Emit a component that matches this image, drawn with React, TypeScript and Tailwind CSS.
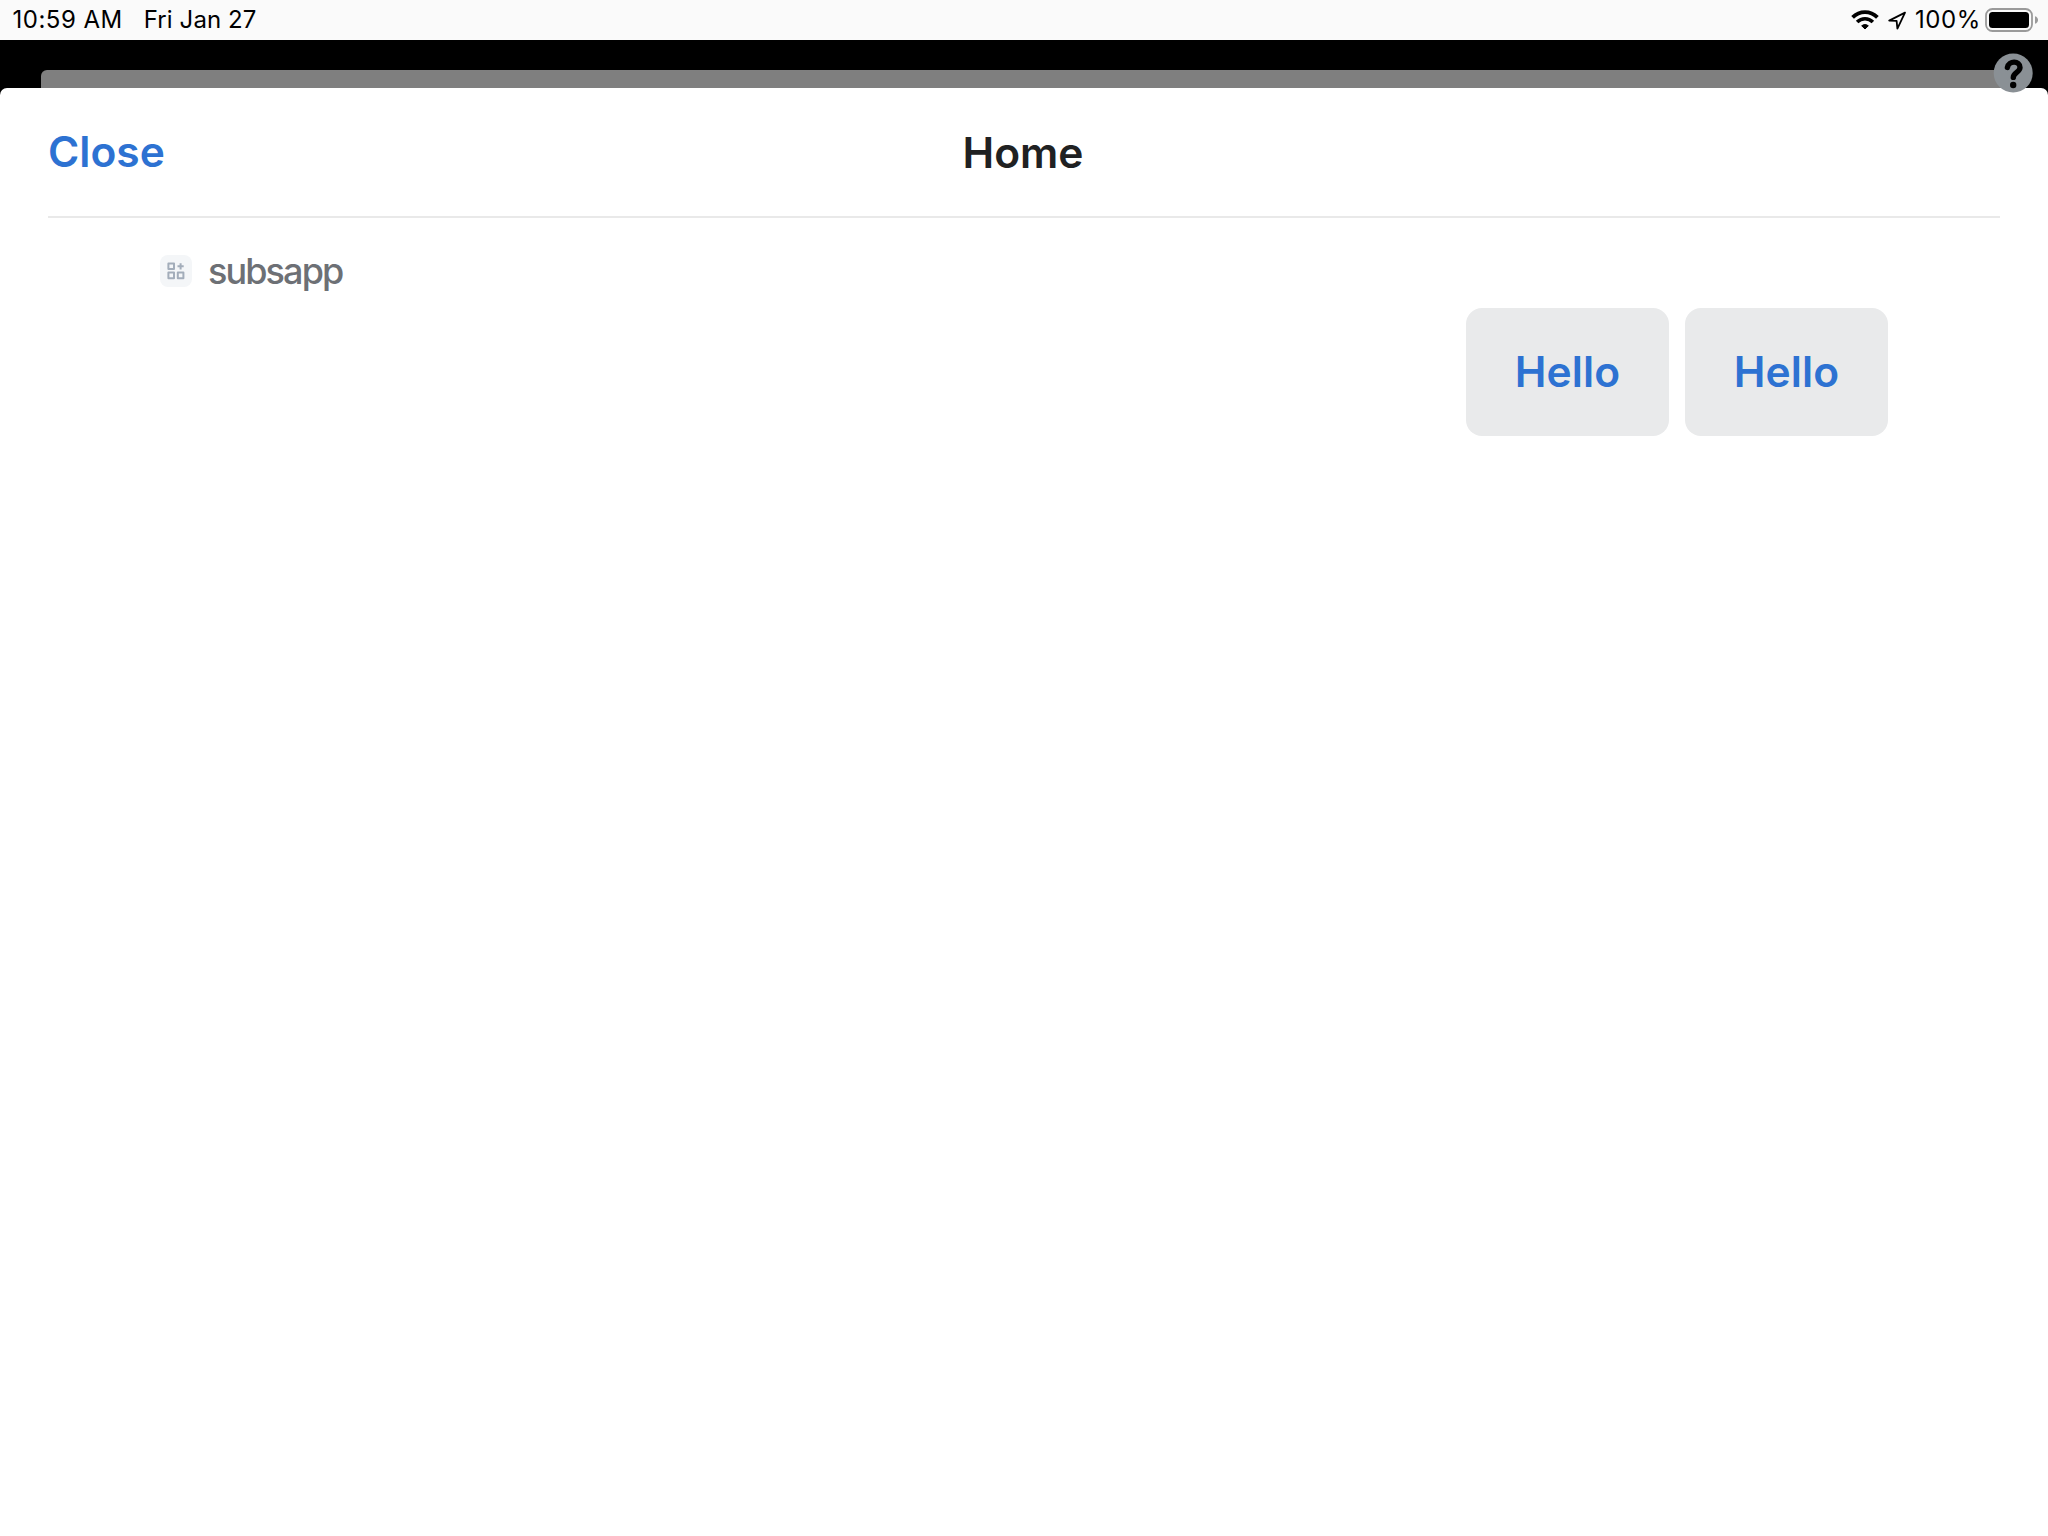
function WifiIcon() {
  return (
    <svg className="h-[20px] w-[28px]" viewBox="0 0 28 20" fill="none" stroke="#000">
      <path d="M1.6 7.4C8.6 .4 19.4 .4 26.4 7.4" strokeWidth="3.8" />
      <path d="M6.1 12C10.6 7.6 17.4 7.6 21.9 12" strokeWidth="3.6" />
      <path d="M14 19L10.7 15.8C12.6 14.2 15.4 14.2 17.3 15.8Z" fill="#000" strokeWidth="1" strokeLinejoin="round" />
    </svg>
  );
}

function LocationIcon() {
  return (
    <svg className="h-[20px] w-[20px]" viewBox="0 0 20 20" fill="none" stroke="#000" strokeWidth="1.8" strokeLinejoin="round">
      <path d="M18 2.6L2.2 10.6L9.6 10.9L10.4 18.6Z" />
    </svg>
  );
}

function BatteryIcon() {
  return (
    <svg className="h-[24px] w-[54px]" viewBox="0 0 54 24">
      <rect x="1" y="1" width="46" height="22" rx="6.5" fill="none" stroke="#9a9a9a" strokeWidth="1.8" />
      <rect x="4" y="4" width="40" height="16" rx="3.5" fill="#000" />
      <path d="M50 8.2C52 8.8 53 10.2 53 12S52 15.2 50 15.8Z" fill="#9a9a9a" />
    </svg>
  );
}

function HelpIcon() {
  return (
    <svg className="h-[40px] w-[40px]" viewBox="0 0 40 40" fill="none">
      <circle cx="20.2" cy="20" r="19.5" fill="#8a9095" />
      <path
        d="M14.4 14.4C15.8 7.2 27 7.6 27 14.4C27 19.2 20.3 19.4 20.3 24.4"
        stroke="#000"
        strokeWidth="5.4"
        strokeLinecap="round"
      />
      <circle cx="20.2" cy="32" r="3.2" fill="#000" />
    </svg>
  );
}

function AppIcon() {
  return (
    <div className="flex size-8 items-center justify-center rounded-lg bg-[#f4f6f8]">
      <svg className="size-[18px]" viewBox="0 0 18 18" fill="none" stroke="#a3adba" strokeWidth="2" strokeLinejoin="round">
        <rect x="1.4" y="1.4" width="5.6" height="5.6" />
        <rect x="1.4" y="10.6" width="5.6" height="5.6" />
        <rect x="10.8" y="10.6" width="5.6" height="5.6" />
        <path d="M13.6 1.2V7.4M10.5 4.3H16.7" />
      </svg>
    </div>
  );
}

function HelloButton() {
  return (
    <button className="flex h-32 w-[203px] items-center justify-center rounded-2xl bg-[#e9eaeb] text-[42.5px] leading-none font-semibold tracking-[0.1px] text-[#2d72d2]">
      Hello
    </button>
  );
}

export default function App() {
  return (
    <div className="flex h-[1536px] w-[2048px] flex-col overflow-hidden bg-black font-['Inter',sans-serif]">
      <div className="flex h-10 shrink-0 items-center bg-[#fafafa] pl-[12.5px] text-[24px] leading-none text-black">
        <span className="tracking-[0.5px]">10:59 AM</span>
        <span className="ml-[21px] tracking-[0.1px]">Fri Jan 27</span>
        <div className="ml-auto flex items-center pr-[9px]">
          <WifiIcon />
          <div className="ml-[8px] flex">
            <LocationIcon />
          </div>
          <span className="ml-[8px] w-[65px] tracking-[0.6px]">100%</span>
          <div className="ml-[5px] flex">
            <BatteryIcon />
          </div>
        </div>
      </div>
      <div className="relative mx-[41px] mt-[30px] h-[18px] shrink-0 rounded-t-[6px] bg-[#7f7f7f]">
        <div className="absolute top-[-17px] right-[-26px] z-10">
          <HelpIcon />
        </div>
      </div>
      <main className="flex-1 rounded-t-[7px] bg-white px-12">
        <header className="grid h-[130px] grid-cols-3 items-center border-b-2 border-[#e9e9e9] text-[42.5px] leading-none font-semibold">
          <button className="justify-self-start text-[#2d72d2]">Close</button>
          <h1 className="justify-self-center pt-[2px] pr-[2px] text-[#202122]">Home</h1>
        </header>
        <div className="px-28 pt-[35px]">
          <div className="flex h-9 items-center gap-4">
            <AppIcon />
            <span className="text-[36px] leading-none font-medium tracking-[-1.9px] text-[#6d7075]">subsapp</span>
          </div>
          <div className="mt-[19px] flex justify-end gap-4">
            <HelloButton />
            <HelloButton />
          </div>
        </div>
      </main>
    </div>
  );
}
